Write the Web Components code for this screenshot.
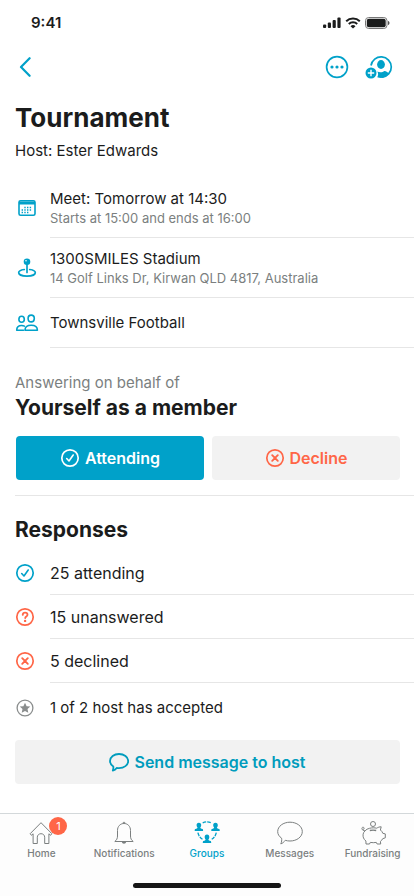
<!DOCTYPE html>
<html lang="en">
<head>
<meta charset="utf-8">
<meta name="viewport" content="width=device-width, initial-scale=1">
<title>Tournament</title>
<style>
  :root {
    --ink: #1b1c1c;
    --muted: #7b7f7f;
    --brand: #00a1c9;
    --brand-dark: #009cbd;
    --alert: #ff6647;
    --line: #e6e6e6;
    --fill: #f2f2f2;
  }
  body {
    margin: 0;
    background: #fff;
    color: var(--ink);
    font-family: Inter, "Liberation Sans", sans-serif;
    font-size: 15px;
    line-height: 20px;
  }
</style>
</head>
<body>
<event-screen></event-screen>

<script>
const ICONS = {
  signal: ['0 0 18 12', '<g fill="currentColor"><rect x="0" y="7.500" width="3.200" height="3.500" rx="1"/><rect x="4.800" y="5.500" width="3.200" height="5.500" rx="1"/><rect x="9.600" y="3" width="3.200" height="8" rx="1"/><rect x="14.400" y="0.500" width="3.200" height="10.500" rx="1"/></g>'],
  wifi: ['0 0 16 12', '<g fill="none" stroke="currentColor" stroke-width="2"><path d="M1.200 4.300a9.800 9.800 0 0 1 13.600 0"/><path d="M3.800 7a6 6 0 0 1 8.400 0"/></g><path d="M8 11.600L5.500 9.200a3.600 3.600 0 0 1 5 0z" fill="currentColor"/>'],
  battery: ['0 0 25 12', '<rect x=".5" y=".5" width="21.500" height="11" rx="3.200" fill="none" stroke="#777"/><rect x="1.800" y="1.800" width="18.900" height="8.400" rx="2" fill="currentColor"/><path d="M23 4v4c1-.3 1.500-1.200 1.500-2s-.5-1.700-1.500-2z" fill="#555"/>'],
  back: ['0 0 12 20', '<path d="M10.600 1.200L2 10l8.600 8.800" fill="none" stroke="currentColor" stroke-width="2.200" stroke-linecap="round" stroke-linejoin="round"/>'],
  more: ['0 0 24 24', '<circle cx="12" cy="12" r="10.400" fill="none" stroke="currentColor" stroke-width="1.700"/><g fill="currentColor"><circle cx="7" cy="12" r="1.600"/><circle cx="12" cy="12" r="1.600"/><circle cx="17" cy="12" r="1.600"/></g>'],
  invite: ['0 0 28 24', '<path d="M6 10.500A10.200 10.200 0 1 1 17 22.200" fill="none" stroke="currentColor" stroke-width="1.700"/><ellipse cx="16" cy="9.500" rx="3.900" ry="4.400" fill="currentColor"/><path d="M12.300 16.500c2 1 5.400 1 7-.6 2 .2 3.800 1.300 4.600 2.600-2 3-5 4.400-7.900 4.400-1.300 0-2.600-.3-3.700-.7 1-1.700 1.200-3.900 0-5.700z" fill="currentColor"/><circle cx="6" cy="18" r="5.500" fill="currentColor"/><path d="M6 14.800v6.400M2.800 18h6.400" stroke="#fff" stroke-width="1.400"/>'],
  calendar: ['0 0 24 24', '<rect x="4" y="4.700" width="16" height="14.600" rx="1.600" fill="none" stroke="currentColor" stroke-width="1.600"/><path d="M4 5.500h16v3H4z" fill="currentColor"/><g stroke="currentColor" stroke-width="1.400" stroke-dasharray="1.400 1.300"><path d="M9.300 11.500h8"/><path d="M6.600 14h10.700"/><path d="M6.600 16.500h8"/></g>'],
  pin: ['0 0 24 24', '<circle cx="12" cy="5.700" r="3.300" fill="currentColor"/><circle cx="11" cy="4.700" r=".8" fill="#fff"/><path d="M12 8v8.500" stroke="currentColor" stroke-width="1.700" stroke-linecap="round"/><path d="M9.300 13.500c-3.300.4-5.600 1.600-5.600 3.200 0 2 3.700 3.400 8.300 3.400s8.300-1.400 8.300-3.400c0-1.600-2.300-2.800-5.600-3.200" fill="none" stroke="currentColor" stroke-width="1.700" stroke-linecap="round"/>'],
  people: ['0 0 24 24', '<g fill="none" stroke="currentColor" stroke-width="1.600" stroke-linejoin="round" stroke-linecap="round"><ellipse cx="6.600" cy="8.300" rx="2.700" ry="3"/><path d="M8.500 19.200H1.700c0-3.200 1.300-4.700 4.900-4.700 1.200 0 2.100.2 2.900.6"/><ellipse cx="16.200" cy="7.500" rx="3.100" ry="3.400"/><path d="M10 19.200c0-3.600 2-5 6.200-5s6.200 1.400 6.200 5z"/></g>'],
  check: ['0 0 20 20', '<circle cx="10" cy="10" r="8.200" fill="none" stroke="currentColor" stroke-width="1.700"/><path d="M6.700 10.500l2.300 2.500 4.200-6" fill="none" stroke="currentColor" stroke-width="1.600" stroke-linecap="round" stroke-linejoin="round"/>'],
  cross: ['0 0 20 20', '<circle cx="10" cy="10" r="8.200" fill="none" stroke="currentColor" stroke-width="1.700"/><path d="M7.200 7.200l5.600 5.600M12.800 7.200l-5.600 5.600" stroke="currentColor" stroke-width="1.900" stroke-linecap="round"/>'],
  question: ['0 0 20 20', '<circle cx="10" cy="10" r="8.200" fill="none" stroke="currentColor" stroke-width="1.700"/><path d="M7.700 7.900c.1-1.400 1-2.200 2.400-2.200s2.400.8 2.400 2c0 1.700-2.300 1.700-2.300 3.300" fill="none" stroke="currentColor" stroke-width="1.800" stroke-linecap="round"/><circle cx="10.100" cy="13.900" r="1.200" fill="currentColor"/>'],
  star: ['0 0 20 20', '<circle cx="10" cy="10" r="7.900" fill="none" stroke="currentColor" stroke-width="1.300"/><path d="M10 4.800l1.600 3.400 3.700.4-2.800 2.500.8 3.700-3.300-1.900-3.300 1.900.8-3.700-2.800-2.500 3.700-.4z" fill="currentColor"/>'],
  bubble: ['0 0 20 20', '<path d="M4.300 14.400C2.300 13.100 1 11.200 1 9.100 1 5.100 5 2 10 2s9.200 3.100 9.200 7.100-4.200 7-9.200 7c-.8 0-1.600-.1-2.300-.2-.9 1.300-2.200 2.300-3.900 2.600.5-1.200.7-2.800.5-4.100z" fill="none" stroke="currentColor" stroke-width="1.800" stroke-linejoin="round"/>'],
  home: ['0 0 26 24', '<path d="M2.200 12.700L13 1.700l10.800 11-1.200 1.600-1.700-1.500v9.700h-4.200v-6.300c0-2-1.600-3.500-3.700-3.500s-3.700 1.500-3.700 3.500v6.300H5.100v-9.700l-1.700 1.500z" fill="none" stroke="currentColor" stroke-linejoin="round"/>'],
  bell: ['0 0 26 24', '<path d="M3.800 20.500c1.800-1.300 2.700-3 2.700-5.500V9.500c0-4 2.600-7 6.500-7s6.500 3 6.500 7V15c0 2.500.9 4.200 2.700 5.500z" fill="none" stroke="currentColor" stroke-linejoin="round"/><path d="M11.800 2.400c0-1.600 2.400-1.600 2.400 0" fill="none" stroke="currentColor"/><path d="M10.800 20.800h4.400c-.2 2.500-4.200 2.500-4.400 0z" fill="currentColor"/>'],
  groups: ['0 0 26 24', '<g fill="currentColor"><path d="M4.900 1.700c1.600 0 2.500 1.100 2.300 2.800-.1 1-.5 1.600-.9 2.100 0 .8.400 1 2.300 1.500.4.200.5.700.5 2H.7c0-1.300.1-1.800.5-2 1.900-.5 2.300-.7 2.300-1.500-.4-.5-.8-1.100-.9-2.100-.2-1.700.7-2.800 2.300-2.800z"/><path d="M21.500 1.700c1.600 0 2.500 1.100 2.300 2.800-.1 1-.5 1.600-.9 2.100 0 .8.400 1 2.300 1.500.4.200.5.700.5 2h-8.400c0-1.300.1-1.800.5-2 1.900-.5 2.300-.7 2.300-1.500-.4-.5-.8-1.100-.9-2.100-.2-1.700.7-2.800 2.300-2.800z"/><path d="M13 13.600c1.600 0 2.500 1.100 2.300 2.800-.1 1-.5 1.600-.9 2.100 0 .8.400 1 2.300 1.500.4.200.5.900.5 2H8.800c0-1.100.1-1.800.5-2 1.900-.5 2.300-.7 2.300-1.500-.4-.5-.8-1.100-.9-2.100-.2-1.700.7-2.800 2.300-2.800z"/></g><path d="M8.700 1.800a10 10 0 0 1 8.600 0M3.900 11.700a10 10 0 0 0 4.600 6.600M22.300 11.700a10 10 0 0 1-4.600 6.600" fill="none" stroke="currentColor" stroke-width="1.300" stroke-dasharray="3.600 1"/>'],
  message: ['0 0 26 24', '<path d="M4.600 17.200C2 15.400.7 13.200.7 10.600.7 5.300 6.200 1.200 13 1.200s12.300 4.100 12.300 9.400S19.800 20 13 20c-1.700 0-3.300-.2-4.700-.7-1.300 1.700-2.700 3-4.500 3.600.9-2 1.100-3.800.8-5.700z" fill="none" stroke="currentColor" stroke-linejoin="round"/>'],
  piggy: ['0 0 26 24', '<g fill="none" stroke="currentColor" stroke-linejoin="round"><circle cx="13" cy="3" r="2.500"/><path d="M9.500 7.300c-1.900.4-3.300 1.200-4.400 2.500C3.700 9.800 2.400 9.300 2 8c-.3-1 .3-1.800 1.100-1.800 1.300 0 1.500 2.500-.2 2.300M9.500 7.300c2.400-.6 5-.6 7.300-.1 1.300-1 2.700-1.400 4.400-1.400l-.8 3.200c1.200.9 2 2 2.400 3.300l2.500.6v3.900l-2.600.9c-.6 1.300-1.300 2-2.300 2.700l.3 2.600h-3.600l-.8-1.600c-2 .4-4 .4-6 0L9.500 23H6l-.1-3c-2.200-1.800-3.200-4-2.800-6.800.2-1.300.9-2.500 2-3.400"/><path d="M9.800 9.500c2.200-.5 4.300-.5 6.400 0" stroke-width="1.400"/></g>']
};

class AppIcon extends HTMLElement {
  connectedCallback() {
    const [box, art] = ICONS[this.getAttribute('name')];
    const [, , w, h] = box.split(' ');
    this.attachShadow({ mode: 'open' }).innerHTML = `
      <style>
        :host { display: inline-flex; flex: none; }
        svg { display: block; }
      </style>
      <svg viewBox="${box}" width="${w}" height="${h}" aria-hidden="true">${art}</svg>`;
  }
}

function element(name, html) {
  const template = document.createElement('template');
  template.innerHTML = html;
  customElements.define(name, class extends HTMLElement {
    constructor() {
      super();
      this.attachShadow({ mode: 'open' }).append(template.content.cloneNode(true));
    }
  });
}

customElements.define('app-icon', AppIcon);

element('status-bar', `
  <style>
    :host { display: flex; align-items: center; justify-content: space-between; height: 45px; padding: 0 24px 0 31px; }
    time { font-weight: 600; }
    div { display: flex; gap: 4px; align-items: center; }
  </style>
  <time>9:41</time>
  <div><app-icon name="signal"></app-icon><app-icon name="wifi"></app-icon><app-icon name="battery"></app-icon></div>
`);

element('nav-bar', `
  <style>
    :host { display: flex; align-items: center; height: 43px; padding: 0 21px 0 19px; gap: 16px; }
    button { border: 0; padding: 0; background: none; color: var(--brand); display: flex; cursor: pointer; }
    .back { margin-right: auto; }
  </style>
  <button class="back" aria-label="Back"><app-icon name="back"></app-icon></button>
  <button aria-label="More options"><app-icon name="more"></app-icon></button>
  <button aria-label="Add person"><app-icon name="invite"></app-icon></button>
`);

element('detail-row', `
  <style>
    :host { display: flex; padding-left: 15px; color: var(--ink); }
    .mark { flex: none; width: 35px; display: flex; align-items: center; color: var(--row-mark, var(--brand)); }
    .text { flex: 1; display: flex; flex-direction: column; justify-content: center; box-sizing: border-box;
            min-height: var(--row-height, 60px); border-bottom: 1px solid var(--line); }
    :host([last]) .text { border-bottom: 0; }
    ::slotted([slot=note]) { display: block; font-size: 13px; line-height: 18px; color: var(--muted); }
  </style>
  <div class="mark"><slot name="icon"></slot></div>
  <div class="text"><div><slot></slot></div><slot name="note"></slot></div>
`);

element('action-button', `
  <style>
    :host { display: block; flex: 1; }
    button { width: 100%; height: 44px; border: 0; border-radius: 4px; padding: 0; display: flex; align-items: center;
             justify-content: center; gap: 5px; font: 600 16px/20px Inter, "Liberation Sans", sans-serif;
             background: var(--fill); color: var(--brand-dark); cursor: pointer; }
    :host([kind=primary]) button { background: var(--brand); color: #fff; }
    :host([kind=danger]) button { color: var(--alert); }
  </style>
  <button><slot name="icon"></slot><slot></slot></button>
`);

element('tab-item', `
  <style>
    :host { display: block; flex: 1 1 0; min-width: 0; }
    a { display: flex; flex-direction: column; align-items: center; gap: 1px; padding-top: 7px; color: var(--muted);
        text-decoration: none; font-size: 10px; line-height: 14px; font-weight: 500; }
    :host([current]) a { color: var(--brand); }
    span { position: relative; display: flex; }
    ::slotted([slot=badge]) { position: absolute; left: 21px; top: -4px; width: 18px; height: 18px; border-radius: 50%;
        background: var(--alert); color: #fff; font-size: 11px; line-height: 18px; font-weight: 400; text-align: center; }
  </style>
  <a href="#"><span><slot name="icon"></slot><slot name="badge"></slot></span><slot></slot></a>
`);

element('tab-bar', `
  <style>
    :host { display: block; margin-top: auto; border-top: 1px solid #d3d8da; background: #fdfdfd; }
    nav { display: flex; height: 69px; }
    .grip { width: 148px; height: 5px; border-radius: 3px; background: #161616; margin: 0 auto 8px; }
  </style>
  <nav aria-label="Main"><slot></slot></nav>
  <div class="grip"></div>
`);

element('event-screen', `
  <style>
    :host { display: flex; flex-direction: column; min-height: 100vh; }
    h1, h2, p { margin: 0; }
    header, .answer { padding: 0 14px 0 15px; }
    h1 { font-size: 26px; line-height: 32px; font-weight: 700; margin-top: 14px; }
    h2 { font-size: 21px; line-height: 28px; font-weight: 700; }
    header p { margin-top: 7px; }
    .details { margin-top: 17px; }
    .group { --row-height: 50px; }
    .answer { margin-top: 25px; }
    .answer p { color: var(--muted); }
    .answer h2 { margin-top: 1px; }
    .choices { display: flex; gap: 8px; margin-top: 14px; padding-left: 1px; }
    hr { border: 0; border-top: 1px solid var(--line); margin: 15px 0 0 15px; }
    .responses h2 { margin: 20px 15px 7px; }
    .responses { --row-height: 44px; }
    .count { font-size: 16px; }
    .alert { --row-mark: var(--alert); }
    .quiet { --row-mark: #8a8d8d; --row-height: 50px; }
    .send { padding: 7px 14px 16px 15px; }
  </style>
  <status-bar></status-bar>
  <nav-bar></nav-bar>
  <header>
    <h1>Tournament</h1>
    <p>Host: Ester Edwards</p>
  </header>
  <section class="details">
    <detail-row><app-icon slot="icon" name="calendar"></app-icon>Meet: Tomorrow at 14:30<span slot="note">Starts at 15:00 and ends at 16:00</span></detail-row>
    <detail-row><app-icon slot="icon" name="pin"></app-icon>1300SMILES Stadium<span slot="note">14 Golf Links Dr, Kirwan QLD 4817, Australia</span></detail-row>
    <detail-row class="group"><app-icon slot="icon" name="people"></app-icon>Townsville Football</detail-row>
  </section>
  <section class="answer">
    <p>Answering on behalf of</p>
    <h2>Yourself as a member</h2>
    <div class="choices">
      <action-button kind="primary"><app-icon slot="icon" name="check"></app-icon>Attending</action-button>
      <action-button kind="danger"><app-icon slot="icon" name="cross"></app-icon>Decline</action-button>
    </div>
  </section>
  <hr>
  <section class="responses">
    <h2>Responses</h2>
    <detail-row class="count"><app-icon slot="icon" name="check"></app-icon>25 attending</detail-row>
    <detail-row class="count alert"><app-icon slot="icon" name="question"></app-icon>15 unanswered</detail-row>
    <detail-row class="count alert"><app-icon slot="icon" name="cross"></app-icon>5 declined</detail-row>
    <detail-row class="quiet" last><app-icon slot="icon" name="star"></app-icon>1 of 2 host has accepted</detail-row>
  </section>
  <div class="send"><action-button><app-icon slot="icon" name="bubble"></app-icon>Send message to host</action-button></div>
  <tab-bar>
    <tab-item><app-icon slot="icon" name="home"></app-icon><b slot="badge">1</b>Home</tab-item>
    <tab-item><app-icon slot="icon" name="bell"></app-icon>Notifications</tab-item>
    <tab-item current><app-icon slot="icon" name="groups"></app-icon>Groups</tab-item>
    <tab-item><app-icon slot="icon" name="message"></app-icon>Messages</tab-item>
    <tab-item><app-icon slot="icon" name="piggy"></app-icon>Fundraising</tab-item>
  </tab-bar>
`);
</script>
</body>
</html>
